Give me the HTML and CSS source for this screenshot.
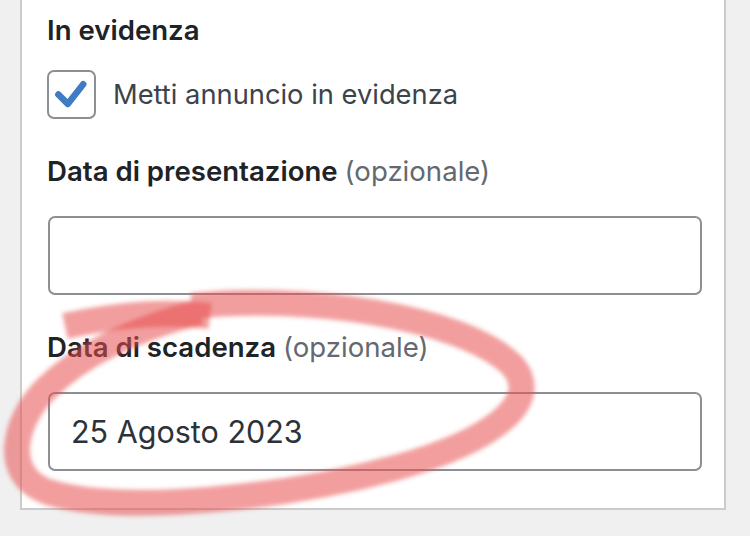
FILE: index.html
```html
<!DOCTYPE html>
<html lang="it">
<head>
<meta charset="utf-8">
<link rel="stylesheet" href="styles.css">
</head>
<body>
<div class="page">
  <section class="panel">
    <h3 class="label first">In evidenza</h3>
    <label class="check-row">
      <span class="checkbox">
        <svg viewBox="0 0 48 48" width="46" height="46"><path d="M10 23.5 L20 33.5 L36.5 12.5" fill="none" stroke="#3f7cc4" stroke-width="7" stroke-linecap="round" stroke-linejoin="round"/></svg>
      </span>
      <span class="check-text">Metti annuncio in evidenza</span>
    </label>
    <div class="label">Data di presentazione <span class="opt">(opzionale)</span></div>
    <div class="input"></div>
    <div class="label">Data di scadenza <span class="opt">(opzionale)</span></div>
    <div class="input">25 Agosto 2023</div>
  </section>
  <svg class="scribble" width="750" height="536" viewBox="0 0 750 536">
    <defs><filter id="soft" x="-10%" y="-10%" width="120%" height="120%"><feGaussianBlur stdDeviation="2"/></filter></defs>
    <g fill="none" stroke="rgba(232,78,78,0.55)" stroke-linecap="butt" filter="url(#soft)">
      <path stroke-width="26" d="M65 326 C110 316 160 310 210 316"/>
      <path stroke-width="26" d="M192 306 C300 294 460 315 512 365 C545 402 490 442 395 468 C285 498 120 515 48 492 C0 475 15 420 45 390 C80 355 130 330 200 312"/>
    </g>
  </svg>
</div>
</body>
</html>
```
FILE: styles.css
```css
* { box-sizing: border-box; }
html, body { margin: 0; padding: 0; }
body {
  background: #f0f0f1;
  width: 750px;
  height: 536px;
  overflow: hidden;
  font-family: Inter, "Liberation Sans", sans-serif;
  color: #1d2327;
}
.page { position: relative; width: 750px; height: 536px; }
.panel {
  margin-left: 20px;
  width: 706px;
  height: 510px;
  background: #fff;
  border: 2px solid #cbcbcb;
  border-top: none;
  padding: 14px 22px 0 25px;
  display: flex;
  flex-direction: column;
}
.label {
  margin: 0;
  font-size: 27.6px;
  font-weight: 600;
  line-height: 32px;
  color: #1d2327;
  margin-top: 36px;
}
.label.first { margin-top: 0; }
.opt { font-weight: 400; color: #646970; }
.check-row {
  display: flex;
  align-items: center;
  gap: 17px;
  margin-top: 24px;
}
.checkbox {
  width: 49px;
  height: 49px;
  border: 2px solid #8c8f94;
  border-radius: 7px;
  display: flex;
  align-items: center;
  justify-content: center;
}
.check-text { font-size: 27.3px; color: #3c434a; }
.input {
  margin-top: 29px;
  margin-left: 1px;
  height: 79px;
  border: 2px solid #8c8f94;
  border-radius: 7px;
  padding: 0 21px;
  display: flex;
  align-items: center;
  font-size: 30.5px;
  color: #2c3338;
}
.scribble { position: absolute; left: 0; top: 0; pointer-events: none; }
```
